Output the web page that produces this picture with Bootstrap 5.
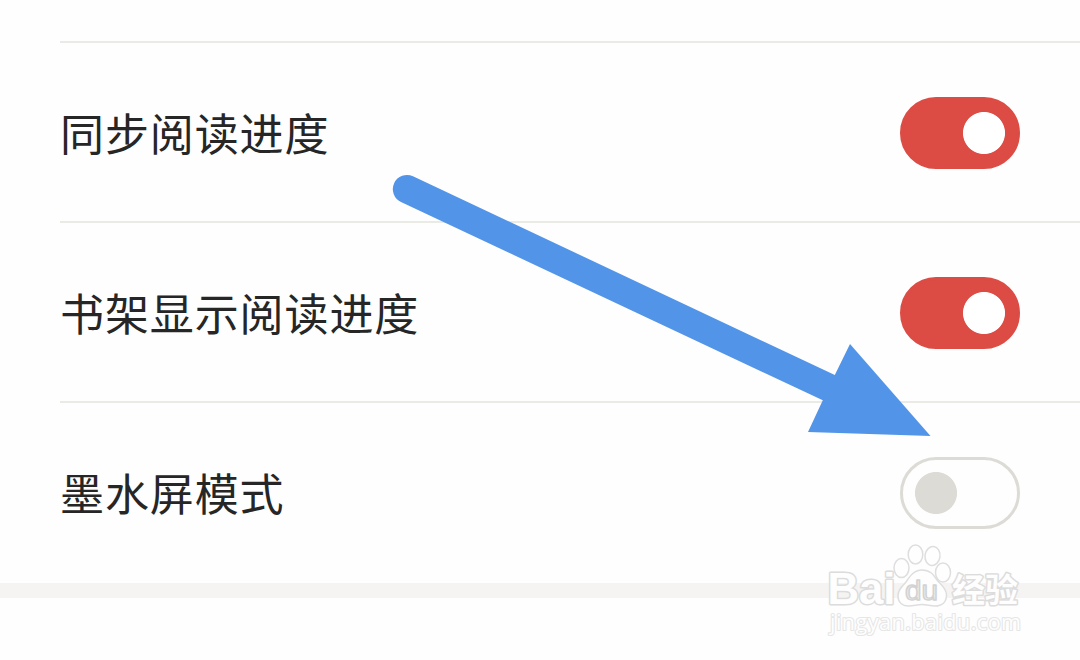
<!DOCTYPE html>
<html lang="zh-CN">
<head>
<meta charset="utf-8">
<meta name="viewport" content="width=device-width, initial-scale=1">
<title>阅读设置</title>
<link href="https://cdn.jsdelivr.net/npm/bootstrap@5.3.0/dist/css/bootstrap.min.css" rel="stylesheet">
<style>
body { background: #fefefe; font-family: "Noto Sans CJK SC", sans-serif; height: 660px; }
.settings { padding: 41px 0 2px 60px; }
.setting-row { height: 180px; border-top: 2px solid #ebebe6; padding: 2px 60px 0 0; }
.setting-label { font-size: 44px; letter-spacing: .9px; line-height: 64px; color: #262626; margin-bottom: 2px; }
.toggle.form-check-input {
  width: 120px; height: 72px; margin: 0; border: 3px solid #dddbd6; border-radius: 36px;
  background-color: #fefefe; box-shadow: none; float: none;
  background-image: radial-gradient(circle, #dddbd6 20.6px, transparent 21.4px);
  background-size: 42px 42px; background-position: 12px 12px; background-repeat: no-repeat;
}
.toggle.form-check-input:checked {
  border-color: #dc4c44; background-color: #dc4c44;
  background-image: radial-gradient(circle, #fff 20.6px, transparent 21.4px);
  background-position: 60px 12px;
}
.section-gap { height: 15px; background: #f5f4f3; }
.overlay { pointer-events: none; }
</style>
</head>
<body class="position-relative overflow-hidden">
<main>
  <div class="settings">
    <div class="setting-row d-flex align-items-center justify-content-between">
      <label class="setting-label" for="sync">同步阅读进度</label>
      <input class="form-check-input toggle" type="checkbox" role="switch" id="sync" checked>
    </div>
    <div class="setting-row d-flex align-items-center justify-content-between">
      <label class="setting-label" for="shelf">书架显示阅读进度</label>
      <input class="form-check-input toggle" type="checkbox" role="switch" id="shelf" checked>
    </div>
    <div class="setting-row d-flex align-items-center justify-content-between">
      <label class="setting-label" for="eink">墨水屏模式</label>
      <input class="form-check-input toggle" type="checkbox" role="switch" id="eink">
    </div>
  </div>
  <div class="section-gap"></div>
</main>
<svg class="overlay position-absolute top-0 start-0" width="1080" height="660" viewBox="0 0 1080 660" aria-hidden="true">
  <!-- pointer arrow -->
  <path fill="#5294e8" d="M413 176.300L834.800 375L850 344L930.500 436L808 432L822.800 400.300L401 202A14 14 0 0 1 413 176.300Z"/>
  <!-- watermark -->
  <g fill="#fefefe" stroke="#dedede" stroke-width="1.500" stroke-linejoin="round">
    <ellipse cx="901.500" cy="568" rx="7.500" ry="9.500"/>
    <ellipse cx="915.500" cy="554.500" rx="7.300" ry="9.500"/>
    <ellipse cx="932.500" cy="556" rx="7.500" ry="9.500" transform="rotate(8 932.500 556)"/>
    <ellipse cx="943" cy="572.500" rx="7.500" ry="9.500"/>
    <path d="M922 570C914 570 910 576 906 582C902 587 898 589 898 596C898 603 903 606 909 606C914 606 917 604.500 922 604.500C927 604.500 930 606 935 606C942 606 946.500 602 946.500 595C946.500 588 941 585 937 580C933 574 930 570 922 570Z"/>
    <g font-family="Liberation Sans, sans-serif" font-weight="700">
      <g stroke="#dcdcdc" stroke-width="3" paint-order="stroke">
        <text x="827.500" y="604" font-size="43.500" textLength="68" lengthAdjust="spacingAndGlyphs">Bai</text>
        <text x="952" y="601.500" font-size="33" font-weight="700" font-family="Noto Sans CJK SC, sans-serif">经验</text>
      </g>
      <text x="905" y="600" font-size="27" font-weight="400" fill="#ececec" stroke="#d2d2d2" stroke-width="1.400" textLength="33" lengthAdjust="spacingAndGlyphs">du</text>
    </g>
    <text x="830" y="630" font-family="Open Sans, sans-serif" font-size="21.500" stroke="#e6e6e6" stroke-width="2.200" paint-order="stroke" textLength="191" lengthAdjust="spacing">jingyan.baidu.com</text>
  </g>
</svg>
<script src="https://cdn.jsdelivr.net/npm/bootstrap@5.3.0/dist/js/bootstrap.bundle.min.js"></script>
</body>
</html>
